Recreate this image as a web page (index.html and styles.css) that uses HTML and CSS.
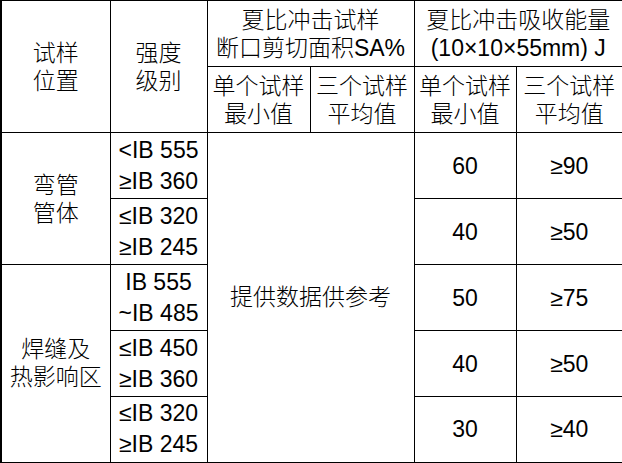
FILE: index.html
```html
<!DOCTYPE html>
<html lang="zh">
<head>
<meta charset="utf-8">
<link rel="stylesheet" href="styles.css">
</head>
<body>
<table class="spec">
  <colgroup>
    <col class="c1"><col class="c2"><col class="c3"><col class="c4"><col class="c5"><col class="c6">
  </colgroup>
  <tr>
    <td rowspan="2" class="cjk">试样<br>位置</td>
    <td rowspan="2" class="cjk">强度<br>级别</td>
    <td colspan="2" class="cjk">夏比冲击试样<br>断口剪切面积SA%</td>
    <td colspan="2" class="cjk">夏比冲击吸收能量<br>(10×10×55mm) J</td>
  </tr>
  <tr>
    <td class="cjk">单个试样<br>最小值</td>
    <td class="cjk">三个试样<br>平均值</td>
    <td class="cjk">单个试样<br>最小值</td>
    <td class="cjk">三个试样<br>平均值</td>
  </tr>
  <tr>
    <td rowspan="2" class="cjk">弯管<br>管体</td>
    <td class="grade">&lt;IB 555<br>≥IB 360</td>
    <td rowspan="5" colspan="2" class="cjk">提供数据供参考</td>
    <td>60</td>
    <td>≥90</td>
  </tr>
  <tr>
    <td class="grade">≤IB 320<br>≥IB 245</td>
    <td>40</td>
    <td>≥50</td>
  </tr>
  <tr>
    <td rowspan="3" class="cjk">焊缝及<br>热影响区</td>
    <td class="grade">IB 555<br>~IB 485</td>
    <td>50</td>
    <td>≥75</td>
  </tr>
  <tr>
    <td class="grade">≤IB 450<br>≥IB 360</td>
    <td>40</td>
    <td>≥50</td>
  </tr>
  <tr>
    <td class="grade">≤IB 320<br>≥IB 245</td>
    <td>30</td>
    <td>≥40</td>
  </tr>
</table>
</body>
</html>
```
FILE: styles.css
```css
html, body {
  margin: 0;
  padding: 0;
  background: #fff;
}
.spec {
  border-collapse: collapse;
  table-layout: fixed;
  width: 622px;
  font-family: "Liberation Sans", "Noto Sans CJK SC", sans-serif;
  font-size: 23px;
  color: #000;
  border-left: 2px solid #000;
  border-right: 2px solid #000;
  border-bottom: 2px solid #000;
  border-top: 1px solid #000;
}
.c1 { width: 109px; }
.c2 { width: 97px; }
.c3 { width: 103px; }
.c4 { width: 104px; }
.c5 { width: 102px; }
.c6 { width: 107px; }
.spec tr {
  height: 66px;
}
.spec td {
  border: 1px solid #000;
  padding: 0;
  text-align: center;
  vertical-align: middle;
  line-height: 30px;
  white-space: nowrap;
}
.spec td.cjk {
  line-height: 28px;
  font-weight: 300;
}
.spec td.grade {
  line-height: 31px;
}
```
